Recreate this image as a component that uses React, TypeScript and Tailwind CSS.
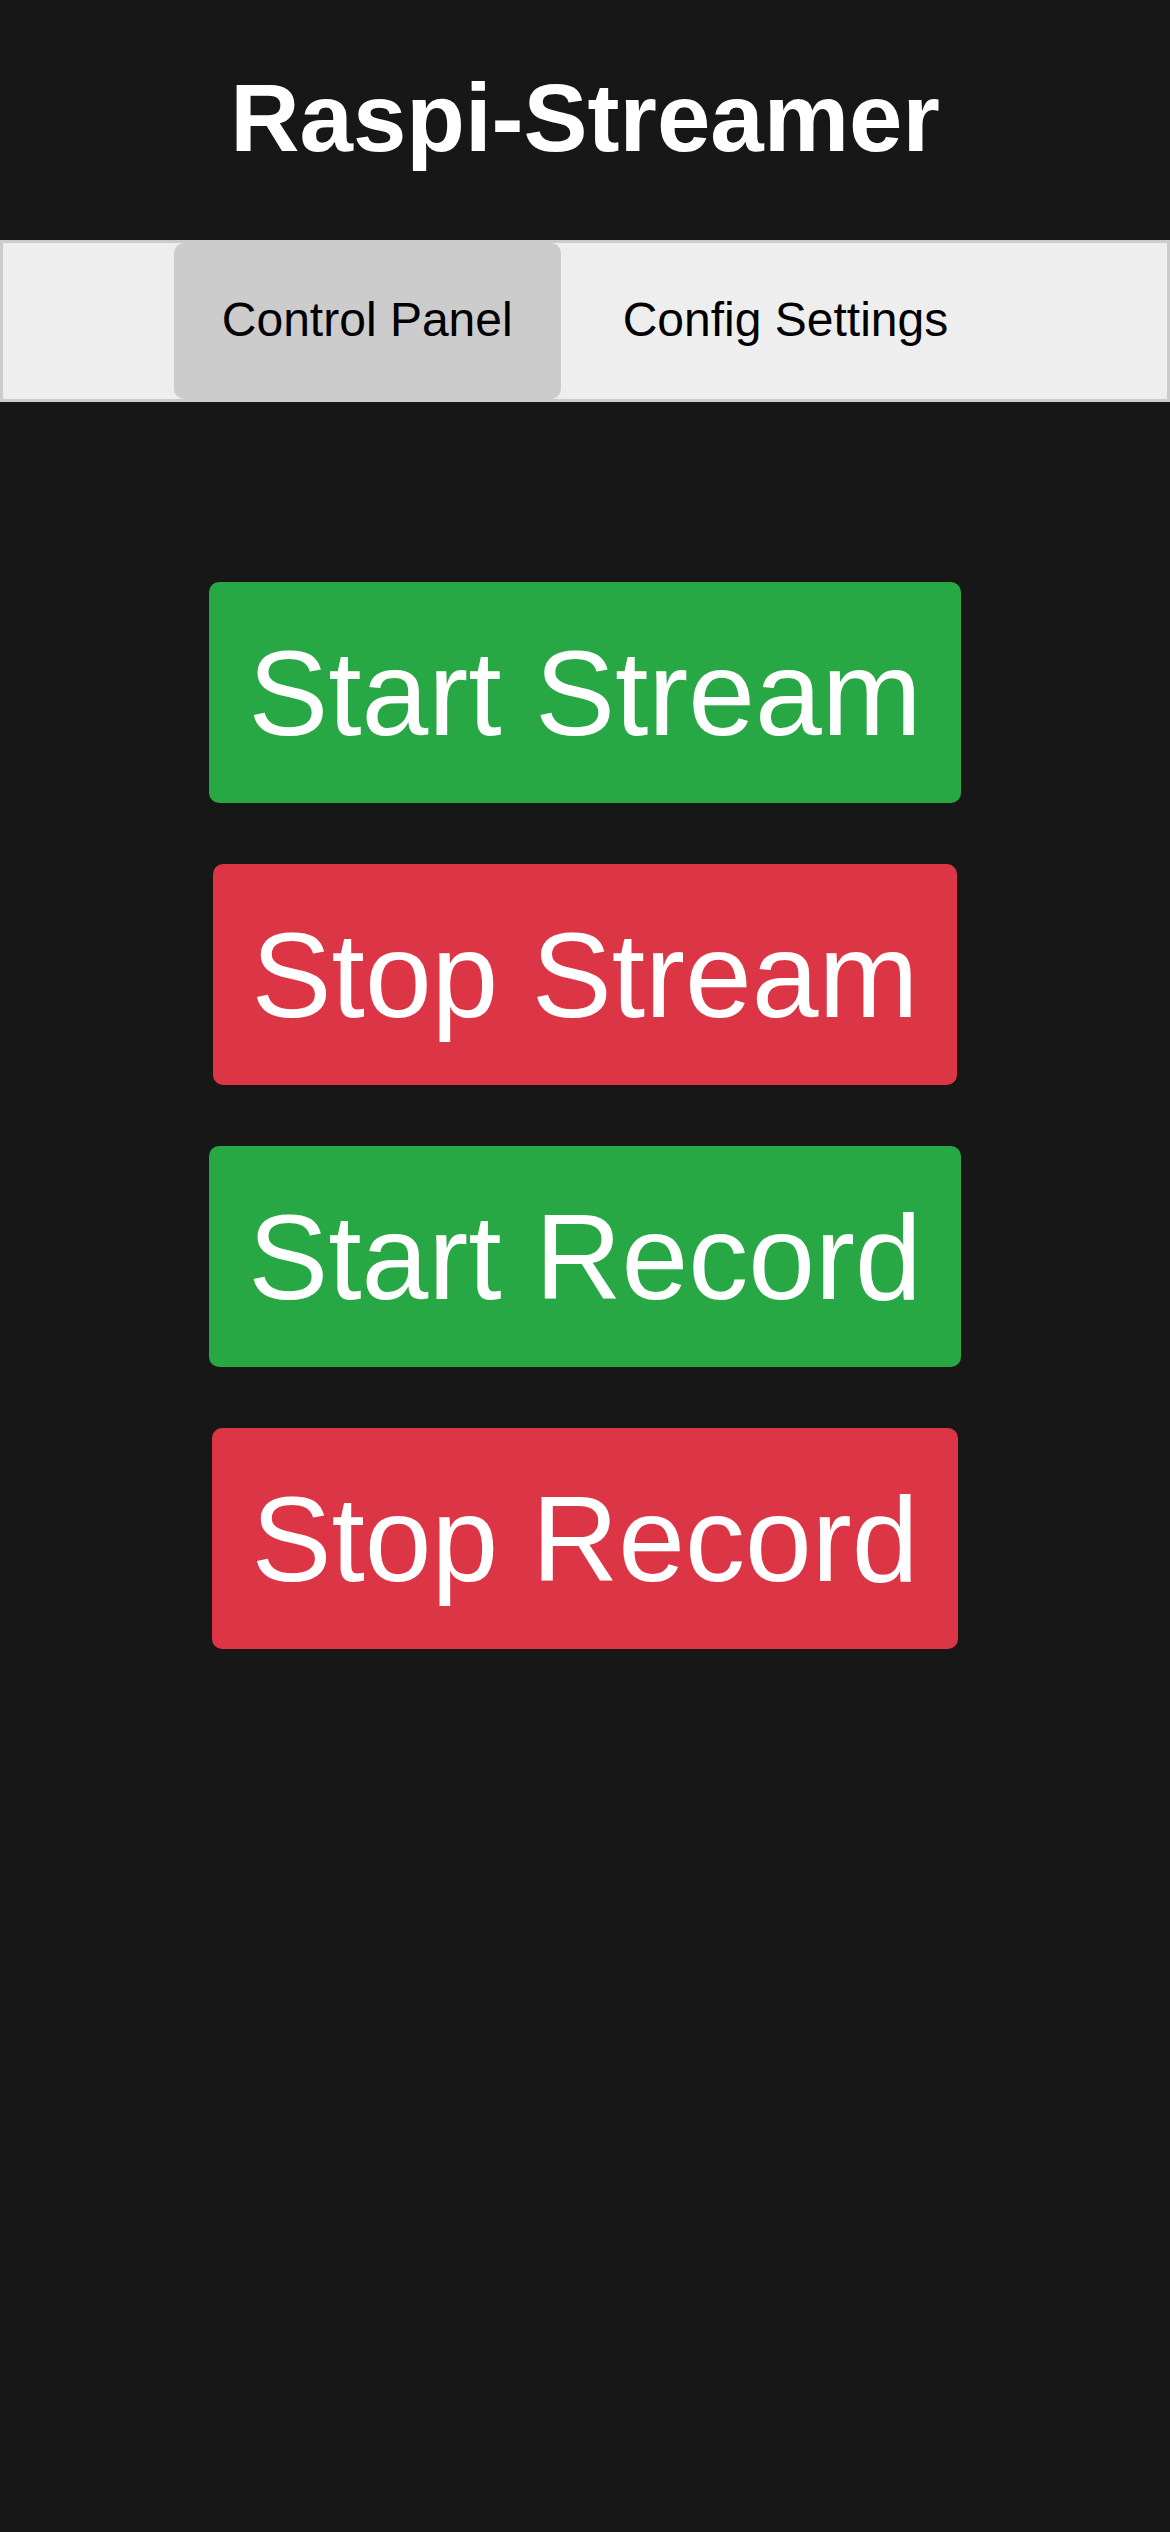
import React from "react";

export default function App() {
  const buttons = [
    { label: "Start Stream", cls: "bg-[#28a745]" },
    { label: "Stop Stream", cls: "bg-[#dc3545]" },
    { label: "Start Record", cls: "bg-[#28a745]" },
    { label: "Stop Record", cls: "bg-[#dc3545]" },
  ];
  return (
    <div
      className="min-h-[2532px] w-full bg-[#171717]"
      style={{ fontFamily: '"Liberation Sans", Arial, sans-serif' }}
    >
      <header className="pt-[63px] pb-[67px]">
        <h1 className="text-center text-[96px] font-bold leading-[110px] text-white">
          Raspi-Streamer
        </h1>
      </header>
      <nav className="flex h-[162px] items-stretch justify-center gap-[14px] border-[3px] border-[#cccccc] bg-[#eeeeee]">
        <button className="flex items-center rounded-[10px] bg-[#cccccc] px-[48px] pb-[3px] text-[48px] leading-[55px] text-black">
          Control Panel
        </button>
        <button className="flex items-center rounded-[10px] px-[48px] pb-[3px] text-[48px] leading-[55px] text-black">
          Config Settings
        </button>
      </nav>
      <main className="flex flex-col items-center gap-[61px] pt-[180px]">
        {buttons.map((b) => (
          <button
            key={b.label}
            className={`flex h-[221px] items-center rounded-[10px] px-[39px] text-[120px] leading-[138px] text-white ${b.cls}`}
          >
            {b.label}
          </button>
        ))}
      </main>
    </div>
  );
}
